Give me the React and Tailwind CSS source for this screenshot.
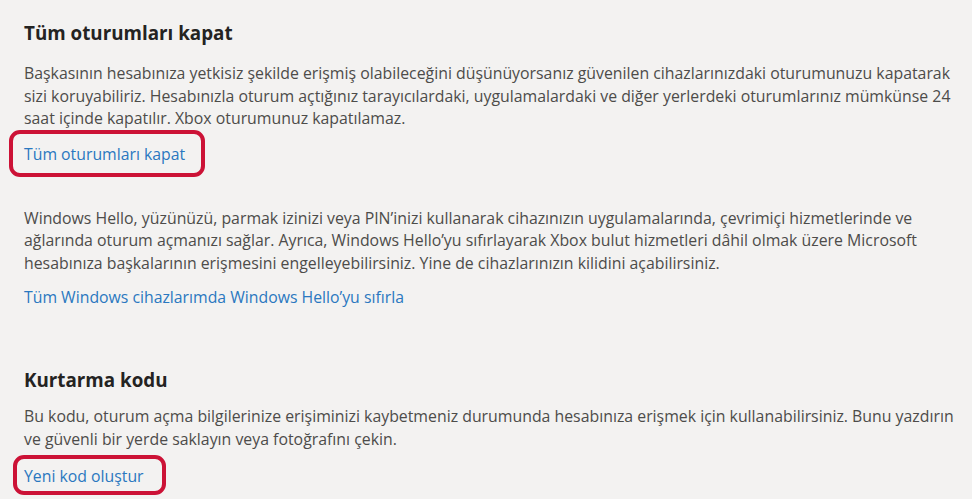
const font = { fontFamily: '"Open Sans", "Noto Sans", sans-serif' };

function Marked({ children, box }) {
  return (
    <span className="relative inline-block">
      <span
        className={`pointer-events-none absolute rounded-[11px] border-[4px] border-[#cc1236] ${box}`}
      />
      {children}
    </span>
  );
}

function Link({ children }) {
  return (
    <a href="#" className="text-[15.8px] leading-[22px] text-[#2a78c0] whitespace-nowrap">
      {children}
    </a>
  );
}

export default function App() {
  return (
    <div className="w-[975px] h-[502px] bg-white overflow-hidden" style={font}>
      <div className="w-[972px] h-[499px] bg-[#f3f2f1] px-6 pt-[20px] text-[#4d4c4a]">
        <h2 className="text-[18.8px] leading-[26px] font-bold text-[#242322]">Tüm oturumları kapat</h2>
        <p className="mt-[16px] text-[15.85px] leading-[22.5px] whitespace-nowrap">
          Başkasının hesabınıza yetkisiz şekilde erişmiş olabileceğini düşünüyorsanız güvenilen cihazlarınızdaki oturumunuzu kapatarak
          <br />
          sizi koruyabiliriz. Hesabınızla oturum açtığınız tarayıcılardaki, uygulamalardaki ve diğer yerlerdeki oturumlarınız mümkünse 24
          <br />
          saat içinde kapatılır. Xbox oturumunuz kapatılamaz.
        </p>
        <div className="mt-[12px]">
          <Marked box="-left-[15px] -right-[20px] -top-[12px] -bottom-[11px]">
            <Link>Tüm oturumları kapat</Link>
          </Marked>
        </div>

        <p className="mt-[41px] text-[15.85px] leading-[22.5px] whitespace-nowrap">
          Windows Hello, yüzünüzü, parmak izinizi veya PIN’inizi kullanarak cihazınızın uygulamalarında, çevrimiçi hizmetlerinde ve
          <br />
          ağlarında oturum açmanızı sağlar. Ayrıca, Windows Hello’yu sıfırlayarak Xbox bulut hizmetleri dâhil olmak üzere Microsoft
          <br />
          hesabınıza başkalarının erişmesini engelleyebilirsiniz. Yine de cihazlarınızın kilidini açabilirsiniz.
        </p>
        <div className="mt-[11px]">
          <Link>Tüm Windows cihazlarımda Windows Hello’yu sıfırla</Link>
        </div>

        <h2 className="mt-[58px] text-[18.8px] leading-[26px] font-bold text-[#242322]">Kurtarma kodu</h2>
        <p className="mt-[12px] text-[15.85px] leading-[22.5px] whitespace-nowrap">
          Bu kodu, oturum açma bilgilerinize erişiminizi kaybetmeniz durumunda hesabınıza erişmek için kullanabilirsiniz. Bunu yazdırın
          <br />
          ve güvenli bir yerde saklayın veya fotoğrafını çekin.
        </p>
        <div className="mt-[14px]">
          <Marked box="-left-[11px] -right-[22px] -top-[9px] -bottom-[7px]">
            <Link>Yeni kod oluştur</Link>
          </Marked>
        </div>
      </div>
    </div>
  );
}
